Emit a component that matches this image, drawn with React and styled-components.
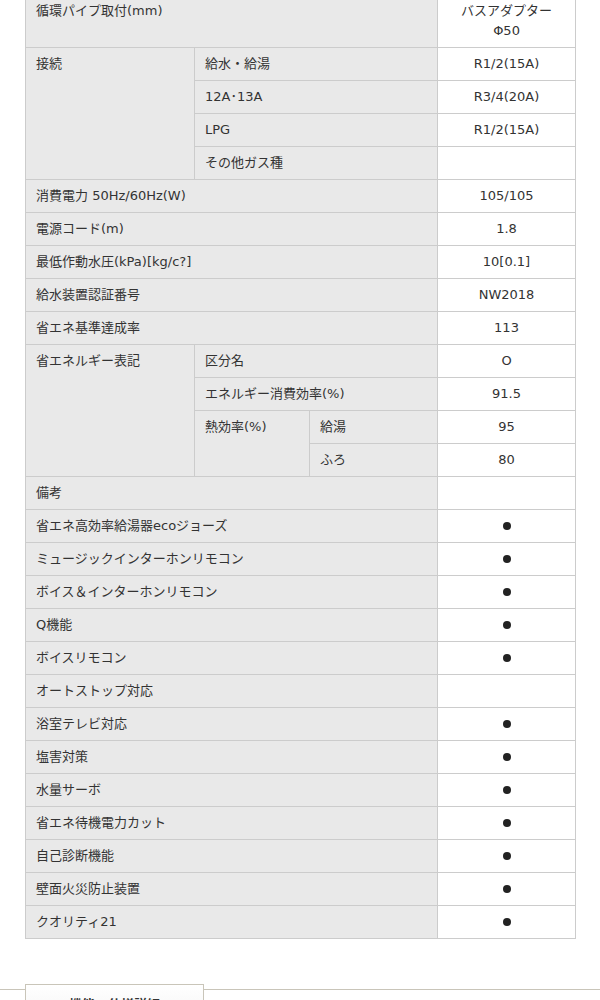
import styled, { createGlobalStyle } from "styled-components";

const GlobalStyle = createGlobalStyle`
  body {
    margin: 0;
    background: #ffffff;
    font-family: "DejaVu Sans", "Noto Sans CJK JP", sans-serif;
    color: #333333;
  }
`;

const Page = styled.div`
  padding: 0 25px;
  overflow: hidden;
`;

const SpecTable = styled.table`
  width: 550px;
  margin-top: -6px;
  border-collapse: collapse;
  table-layout: fixed;
  font-size: 13px;
  line-height: 20px;
`;

const Label = styled.th`
  background: #e9e9e9;
  border: 1px solid #cccccc;
  padding: 6px 10px;
  text-align: left;
  vertical-align: top;
  font-weight: normal;
  color: #333333;
`;

const Value = styled.td`
  background: #ffffff;
  border: 1px solid #cccccc;
  padding: 6px 10px;
  text-align: center;
  vertical-align: top;
  color: #333333;
`;

const Dot = styled.span`
  display: inline-block;
  width: 8px;
  height: 8px;
  border-radius: 50%;
  background: #222222;
  vertical-align: middle;
  margin-top: -2px;
`;

const TabBar = styled.div`
  display: flex;
  align-items: flex-start;
  margin-top: 45px;
`;

const Line = styled.div`
  margin-top: 5px;
  border-top: 1px solid #c9c5b9;
  width: ${(p) => p.$w || "auto"};
  flex: ${(p) => (p.$grow ? 1 : "none")};
`;

const Tab = styled.div`
  width: 179px;
  height: 40px;
  border: 1px solid #c9c5b9;
  border-bottom: none;
  background: linear-gradient(#ffffff, #f4f4f4);
  text-align: center;
  padding-top: 9px;
  box-sizing: border-box;
  font-size: 13px;
  font-weight: bold;
  color: #333333;
`;

const features = [
  ["省エネ高効率給湯器ecoジョーズ", true],
  ["ミュージックインターホンリモコン", true],
  ["ボイス＆インターホンリモコン", true],
  ["Q機能", true],
  ["ボイスリモコン", true],
  ["オートストップ対応", false],
  ["浴室テレビ対応", true],
  ["塩害対策", true],
  ["水量サーボ", true],
  ["省エネ待機電力カット", true],
  ["自己診断機能", true],
  ["壁面火災防止装置", true],
  ["クオリティ21", true],
];

const simple = [
  ["消費電力 50Hz/60Hz(W)", "105/105"],
  ["電源コード(m)", "1.8"],
  ["最低作動水圧(kPa)[kg/c?]", "10[0.1]"],
  ["給水装置認証番号", "NW2018"],
  ["省エネ基準達成率", "113"],
];

function App() {
  return (
    <>
      <GlobalStyle />
      <Page>
        <SpecTable>
          <colgroup>
            <col style={{ width: 169 }} />
            <col style={{ width: 115 }} />
            <col style={{ width: 128 }} />
            <col style={{ width: 138 }} />
          </colgroup>
          <tbody>
            <tr>
              <Label colSpan={3}>循環パイプ取付(mm)</Label>
              <Value>
                バスアダプター
                <br />
                Φ50
              </Value>
            </tr>
            <tr>
              <Label rowSpan={4}>接続</Label>
              <Label colSpan={2}>給水・給湯</Label>
              <Value>R1/2(15A)</Value>
            </tr>
            <tr>
              <Label colSpan={2}>12A･13A</Label>
              <Value>R3/4(20A)</Value>
            </tr>
            <tr>
              <Label colSpan={2}>LPG</Label>
              <Value>R1/2(15A)</Value>
            </tr>
            <tr>
              <Label colSpan={2}>その他ガス種</Label>
              <Value>&nbsp;</Value>
            </tr>
            {simple.map(([k, v]) => (
              <tr key={k}>
                <Label colSpan={3}>{k}</Label>
                <Value>{v}</Value>
              </tr>
            ))}
            <tr>
              <Label rowSpan={4}>省エネルギー表記</Label>
              <Label colSpan={2}>区分名</Label>
              <Value>O</Value>
            </tr>
            <tr>
              <Label colSpan={2}>エネルギー消費効率(%)</Label>
              <Value>91.5</Value>
            </tr>
            <tr>
              <Label rowSpan={2}>熱効率(%)</Label>
              <Label>給湯</Label>
              <Value>95</Value>
            </tr>
            <tr>
              <Label>ふろ</Label>
              <Value>80</Value>
            </tr>
            <tr>
              <Label colSpan={3}>備考</Label>
              <Value>&nbsp;</Value>
            </tr>
            {features.map(([k, on]) => (
              <tr key={k}>
                <Label colSpan={3}>{k}</Label>
                <Value>{on ? <Dot /> : "\u00a0"}</Value>
              </tr>
            ))}
          </tbody>
        </SpecTable>
      </Page>
      <TabBar>
        <Line $w="25px" />
        <Tab>機能・仕様詳細</Tab>
        <Line $grow />
      </TabBar>
    </>
  );
}

export default App;
